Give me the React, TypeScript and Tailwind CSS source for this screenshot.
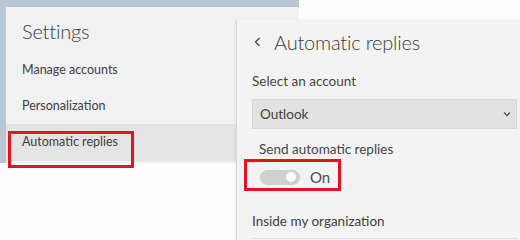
export default function App() {
  const navItems = ["Manage accounts", "Personalization", "Automatic replies"];
  const selected = "Automatic replies";

  return (
    <div
      className="relative w-[520px] h-[240px] overflow-hidden bg-[#fdfdfd] text-[#3a3a3a]"
      style={{ fontFamily: "Lato, 'Noto Sans', sans-serif" }}
    >
      {/* settings window behind the flyout */}
      <div className="w-[299px] h-[163px] bg-[#b9c6d3] pl-[6px] pt-[7px]">
        <div className="h-full bg-[#f1f1f1]">
          <div className="h-[45px] pl-[16px] pt-[11px] text-[20px] font-light leading-[26px] tracking-[-0.2px] text-[#3b3b3b]">
            Settings
          </div>
          {navItems.map((item) => (
            <div
              key={item}
              className={`h-[36px] pl-[16px] flex items-center text-[12.5px] text-[#404040] ${
                item === selected ? "bg-[#e4e4e4] h-[37px]" : ""
              }`}
            >
              {item}
            </div>
          ))}
        </div>
      </div>

      {/* automatic replies flyout */}
      <div className="absolute left-[236px] top-[20px] w-[284px] h-[220px] bg-[#f3f3f3] border-l border-[#d6d6d6] shadow-[-1px_0_3px_rgba(0,0,0,0.06)]">
        <div className="h-[44px] flex items-center pl-[16px]">
          <svg width="10" height="12" viewBox="0 0 10 12" className="mr-[11px]">
            <polyline points="6.5,2 2.5,6 6.5,10" fill="none" stroke="#444" strokeWidth="1.3" />
          </svg>
          <span className="text-[20px] font-light text-[#3b3b3b] leading-none tracking-[-0.2px]">Automatic replies</span>
        </div>
        <div className="pl-[15px] pr-[3px]">
          <div className="h-[35px] flex items-center text-[13.5px] text-[#454545]">Select an account</div>
          <div className="h-[30px] bg-[#e2e2e2] border border-[#d8d8d8] flex items-center justify-between pl-[7px] pr-[4px] text-[13.5px] text-[#404040]">
            <span>Outlook</span>
            <svg width="10" height="8" viewBox="0 0 10 8">
              <polyline points="2,2.5 5,5.5 8,2.5" fill="none" stroke="#555" strokeWidth="1.3" />
            </svg>
          </div>
          <div className="pl-[7px]">
            <div className="mt-[10px] h-[20px] flex items-center text-[13.5px] text-[#454545]">Send automatic replies</div>
            <div className="h-[36px] flex items-center gap-[10px] pl-[1px]">
              <div className="w-[40px] h-[15px] rounded-full bg-[#cfcfcf] flex items-center justify-end pr-[4px]">
                <div className="w-[10px] h-[10px] rounded-full bg-white" />
              </div>
              <span className="text-[15px] text-[#4a4a4a]">On</span>
            </div>
          </div>
          <div className="mt-[16px] h-[20px] flex items-center text-[13.5px] text-[#3e3e3e]">Inside my organization</div>
          <div className="h-[20px] mt-[7px] border border-[#e0e0e0] bg-[#f6f6f6]" />
        </div>
      </div>

      {/* red annotation boxes */}
      <div className="absolute left-[8px] top-[131px] w-[126px] h-[37px] border-[3px] border-[#e5141f]" />
      <div className="absolute left-[244px] top-[159px] w-[97px] h-[32px] border-[3px] border-[#e5141f]" />
    </div>
  );
}
